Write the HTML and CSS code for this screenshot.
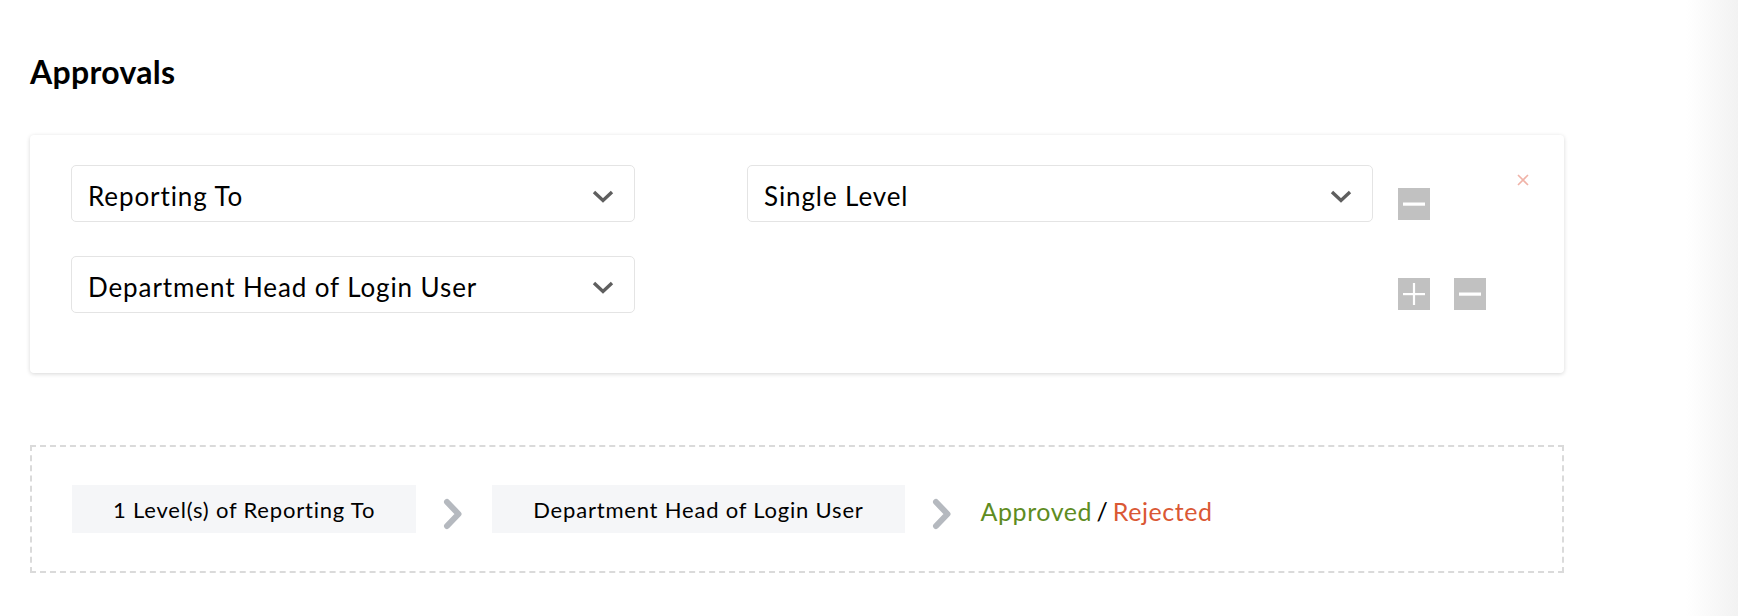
FILE: index.html
```html
<!DOCTYPE html>
<html lang="en">
<head>
<meta charset="utf-8">
<title>Approvals</title>
<link rel="stylesheet" href="styles.css">
</head>
<body>
<div class="page">
  <main class="main">
    <h1 class="title">Approvals</h1>

    <section class="card">
      <button class="close" aria-label="Remove">
        <svg width="12" height="12" viewBox="0 0 12 12"><path d="M1 1 L11 11 M11 1 L1 11" stroke="#f0b3a8" stroke-width="1.6" fill="none"/></svg>
      </button>

      <div class="row">
        <div class="select sel-left">
          <span>Reporting To</span>
          <svg class="chev" width="22" height="13" viewBox="0 0 22 13"><path d="M2 2 L11 10.5 L20 2" stroke="#5f5f5f" stroke-width="3.4" fill="none"/></svg>
        </div>
        <div class="select sel-right">
          <span>Single Level</span>
          <svg class="chev" width="22" height="13" viewBox="0 0 22 13"><path d="M2 2 L11 10.5 L20 2" stroke="#5f5f5f" stroke-width="3.4" fill="none"/></svg>
        </div>
        <button class="sq sq-first" aria-label="Remove level">
          <svg width="32" height="32" viewBox="0 0 32 32"><rect x="5" y="14.5" width="22" height="3.2" fill="#fff"/></svg>
        </button>
      </div>

      <div class="row row2">
        <div class="select sel-left">
          <span>Department Head of Login User</span>
          <svg class="chev" width="22" height="13" viewBox="0 0 22 13"><path d="M2 2 L11 10.5 L20 2" stroke="#5f5f5f" stroke-width="3.4" fill="none"/></svg>
        </div>
        <button class="sq sq-plus" aria-label="Add">
          <svg width="32" height="32" viewBox="0 0 32 32"><rect x="5" y="15" width="22" height="2.2" fill="#fff"/><rect x="14.9" y="5" width="2.2" height="22" fill="#fff"/></svg>
        </button>
        <button class="sq sq-minus" aria-label="Remove">
          <svg width="32" height="32" viewBox="0 0 32 32"><rect x="5" y="14.5" width="22" height="3.2" fill="#fff"/></svg>
        </button>
      </div>
    </section>

    <section class="flow">
      <div class="chip">1 Level(s) of Reporting To</div>
      <svg class="arrow" width="20" height="32" viewBox="0 0 20 32"><path d="M4 4 L15.5 16 L4 28" stroke="#b5b9bf" stroke-width="6" stroke-linecap="round" stroke-linejoin="round" fill="none"/></svg>
      <div class="chip">Department Head of Login User</div>
      <svg class="arrow" width="20" height="32" viewBox="0 0 20 32"><path d="M4 4 L15.5 16 L4 28" stroke="#b5b9bf" stroke-width="6" stroke-linecap="round" stroke-linejoin="round" fill="none"/></svg>
      <div class="result"><span class="ok">Approved</span> / <span class="no">Rejected</span></div>
    </section>
  </main>
  <div class="edge"></div>
</div>
</body>
</html>
```

FILE: styles.css
```css
html, body {
  margin: 0;
  padding: 0;
  background: #fff;
}

body {
  font-family: Lato, "Open Sans", "Liberation Sans", sans-serif;
  color: #000;
}

.page {
  display: flex;
  min-height: 616px;
}

.main {
  flex: 1;
  padding-left: 30px;
}

.edge {
  width: 52px;
  background: linear-gradient(to right, #ffffff, #f2f2f2);
}

.title {
  margin: 52px 0 43px;
  font-size: 32px;
  line-height: 40px;
  font-weight: 700;
  letter-spacing: 0.3px;
  color: #000;
}

.card {
  position: relative;
  width: 1534px;
  box-sizing: border-box;
  padding: 30px 0 60px 41px;
  background: #fff;
  border-radius: 4px;
  box-shadow: 0 1px 4px rgba(0, 0, 0, 0.16);
}

.close {
  position: absolute;
  top: 39px;
  right: 35px;
  width: 12px;
  height: 12px;
  padding: 0;
  border: 0;
  background: none;
  display: block;
}

.close svg {
  display: block;
}

.row {
  display: flex;
  align-items: flex-start;
}

.row2 {
  margin-top: 34px;
}

.select {
  box-sizing: border-box;
  height: 57px;
  border: 1px solid #e4e4e4;
  border-radius: 5px;
  display: flex;
  align-items: center;
  justify-content: space-between;
  padding: 4px 20px 0 16px;
  font-size: 26px;
  letter-spacing: 0.9px;
  color: #000;
}

.sel-left {
  width: 564px;
}

.sel-right {
  width: 626px;
  margin-left: 112px;
}

.chev {
  display: block;
  flex: none;
  margin-top: 2px;
}

.sq {
  width: 32px;
  height: 32px;
  padding: 0;
  border: 0;
  background: #c1c1c1;
  display: block;
  flex: none;
}

.sq svg {
  display: block;
}

.sq-first {
  margin-left: 25px;
  margin-top: 23px;
}

.sq-plus {
  margin-left: 763px;
  margin-top: 22px;
}

.sq-minus {
  margin-left: 24px;
  margin-top: 22px;
}

.flow {
  width: 1534px;
  box-sizing: border-box;
  margin-top: 72px;
  border: 2px dashed #dadada;
  padding: 38px 40px;
  display: flex;
  align-items: center;
}

.chip {
  height: 48px;
  box-sizing: border-box;
  padding: 0 41px;
  background: #f5f6f8;
  display: flex;
  align-items: center;
  font-size: 22px;
  letter-spacing: 0.8px;
  color: #000;
}

.arrow {
  display: block;
  flex: none;
  margin: 9px 29px 0 27px;
}

.result {
  font-size: 25px;
  letter-spacing: 0.55px;
  word-spacing: -2.5px;
  padding-top: 4px;
  color: #000;
}

.ok {
  color: #5e8c22;
}

.no {
  color: #da5834;
}
```
